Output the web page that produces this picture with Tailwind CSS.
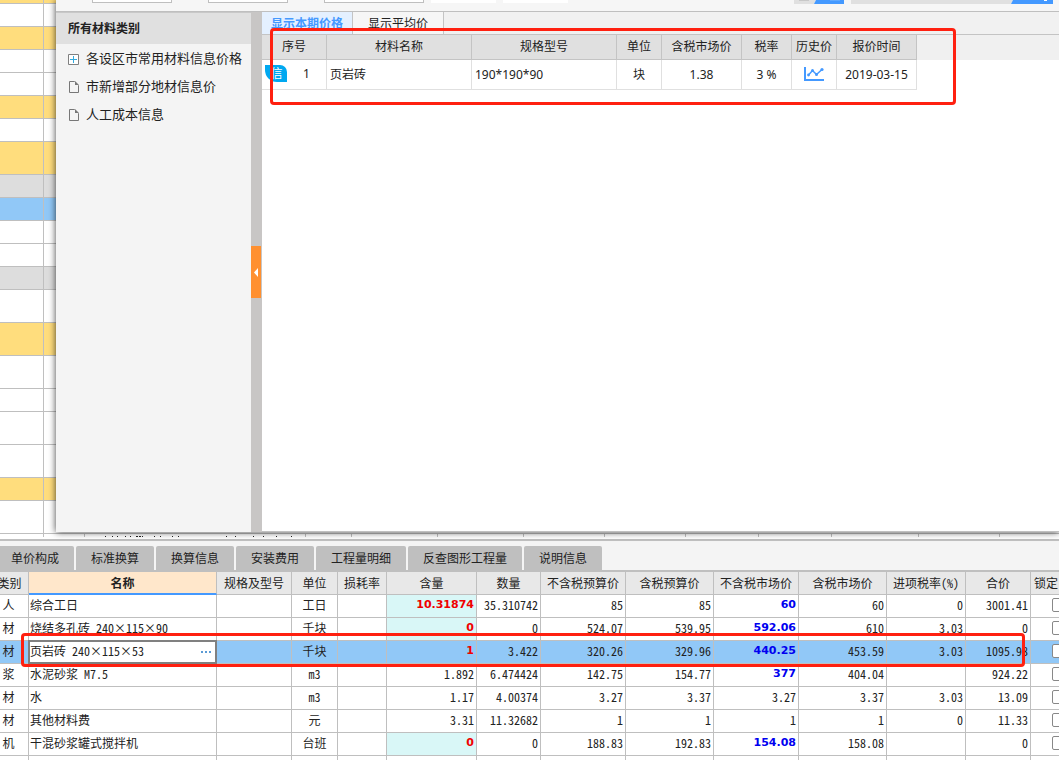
<!DOCTYPE html>
<html lang="zh-CN">
<head>
<meta charset="utf-8">
<title>材料价格查询</title>
<script src="https://cdn.jsdelivr.net/npm/@tailwindcss/browser@4"></script>
</head>
<body class="bg-white">
<div class="relative flex min-h-screen w-full flex-col overflow-hidden font-['Noto_Sans','Noto_Sans_CJK_SC',sans-serif] text-xs text-[#222]">

  <!-- Upper sheet with the price dialog -->
  <section class="flex items-stretch">
    <div id="sheet" class="w-14 shrink-0 overflow-hidden" aria-hidden="true"></div>

    <div class="flex min-w-0 flex-1 flex-col">
      <div class="relative z-10 flex h-[532px] flex-col bg-[#f6f6f6] shadow-[0_0_7px_rgba(0,0,0,0.75)]">
        <!-- Toolbar -->
        <div class="flex h-3 shrink-0 items-start border-b border-[#bfbfbf]">
          <div class="ml-9 h-[3px] w-20 border border-t-0 border-[#bfbfbf] bg-white"></div>
          <div class="ml-9 h-[3px] w-20 border border-t-0 border-[#bfbfbf] bg-white"></div>
          <div class="ml-9 h-[3px] w-[100px] border border-t-0 border-[#bfbfbf] bg-white"></div>
          <div class="ml-[7px] h-[3px] w-[65px] bg-white"></div>
          <div class="ml-[7px] h-[3px] w-[65px] bg-white"></div>
          <div class="mr-[7px] ml-auto">
            <svg class="block h-1 w-[50px]" viewBox="0 0 50 4"><path fill="#e0e0e0" d="M0 0h22l-2 4H0z"/><path fill="#c8c8c8" d="M5 0h10v1H5z"/><path fill="#4499ff" d="M22 0h28v4H20z"/><path fill="#60a9ff" d="M36 0h10v1H36z"/></svg>
          </div>
          <svg class="mr-[6px] block h-1 w-[202px]" viewBox="0 0 202 4"><path fill="#e0e0e0" d="M0 0h162l-2 4H0z"/><path fill="#4499ff" d="M162 0h40v4H160z"/><path fill="#fff" d="M193 0h3v1h-3z"/></svg>
        </div>

        <div class="flex min-h-0 flex-1">
          <!-- Category tree -->
          <aside class="w-[195px] shrink-0 border-t border-[#c8c8c8] bg-[#f4f4f4]">
            <h2 class="flex h-[31px] items-center bg-[#e0e0e0] pl-3 text-xs font-bold">所有材料类别</h2>
            <ul class="pt-px text-[13px]">
              <li class="flex h-7 items-center gap-[7px] pl-3 whitespace-nowrap">
                <svg class="h-[11px] w-[11px]" viewBox="0 0 11 11"><path fill="#fff" stroke="#808080" d="M.5.5h10v10H.5z"/><path stroke="#33aadd" d="M2 5.5h7M5.5 2v7"/></svg>各设区市常用材料信息价格</li>
              <li class="flex h-7 items-center gap-[7px] pl-3 whitespace-nowrap">
                <svg class="h-3 w-[11px]" viewBox="0 0 11 12"><path fill="none" stroke="#777" d="M1.500.5h5l4 4v7h-9z"/><path fill="#777" d="M7 0v4h4z"/></svg>市新增部分地材信息价</li>
              <li class="flex h-7 items-center gap-[7px] pl-3 whitespace-nowrap">
                <svg class="h-3 w-[11px]" viewBox="0 0 11 12"><path fill="none" stroke="#777" d="M1.500.5h5l4 4v7h-9z"/><path fill="#777" d="M7 0v4h4z"/></svg>人工成本信息</li>
            </ul>
          </aside>

          <!-- Splitter -->
          <div class="flex w-[11px] shrink-0 items-center bg-[#c8c6c5]">
            <button class="flex h-[52px] w-[10px] items-center justify-center bg-[#ff9030]" aria-label="收起">
              <svg class="h-[9px] w-1" viewBox="0 0 4 9"><path fill="#fff" d="M4 0v9L0 4.500z"/></svg>
            </button>
          </div>

          <!-- Price list -->
          <div class="min-w-0 flex-1 border-b border-[#c0c0c0] bg-white">
            <div class="flex h-[23px] border-b border-[#c4c4c4] bg-[#f1f1f1]">
              <button class="w-[91px] border-r border-[#c4c4c4] bg-[#e4f0ff] pt-[2px] font-bold text-[#4499ff]">显示本期价格</button>
              <button class="w-[91px] border-r border-[#c4c4c4] bg-[#f6f6f6] pt-[2px]">显示平均价</button>
            </div>
            <div class="bg-[linear-gradient(#f0f0f0_25px,#fff_25px)]">
              <table class="w-[655px] table-fixed border-separate border-spacing-0 text-center whitespace-nowrap">
                <colgroup><col class="w-[65px]"><col class="w-[145px]"><col class="w-[145px]"><col class="w-[45px]"><col class="w-[80px]"><col class="w-[50px]"><col class="w-[45px]"><col class="w-[80px]"></colgroup>
                <thead>
                  <tr class="h-[25px] bg-[#e0e0e0] *:border-r *:border-b *:border-[#c4c4c4] *:p-0 *:font-normal">
                    <th>序号</th><th>材料名称</th><th>规格型号</th><th>单位</th><th>含税市场价</th><th>税率</th><th>历史价</th><th>报价时间</th>
                  </tr>
                </thead>
                <tbody>
                  <tr class="h-[30px] *:border-r *:border-b *:border-[#e0e0e0]">
                    <td class="p-0 pb-[2px]">
                      <div class="flex items-center gap-[16px] pl-[3px]">
                        <span class="flex h-[17px] w-[22px] items-center justify-center rounded-tr-[7px] rounded-bl-[12px] bg-[#00a8f0] pl-px text-white">信</span><span>1</span>
                      </div>
                    </td>
                    <td class="p-0 text-left"><span class="pl-[3px]">页岩砖</span></td>
                    <td class="p-0 text-left"><span class="pl-[3px]">190*190*90</span></td>
                    <td class="p-0">块</td><td class="p-0">1.38</td><td class="p-0">3 %</td>
                    <td class="p-0 pb-[2px]">
                      <button class="block w-full" aria-label="历史价">
                        <svg class="mx-auto h-[14px] w-5" viewBox="0 0 20 14"><path fill="none" stroke="#4499ff" stroke-width="2" d="M1 0v13h19"/><path fill="none" stroke="#4499ff" stroke-width="1.500" d="M4.500 8l4-4.500 4 4 5.500-5"/><g fill="#4499ff"><circle cx="4.500" cy="8" r="1.400"/><circle cx="8.500" cy="3.500" r="1.500"/><circle cx="12.500" cy="7.500" r="1.500"/><circle cx="18" cy="2.500" r="1.600"/></g></svg>
                      </button>
                    </td>
                    <td class="p-0">2019-03-15</td>
                  </tr>
                </tbody>
              </table>
            </div>
          </div>
        </div>
      </div>
      <!-- Sheet row that shows below the dialog -->
      <svg class="mt-px h-[6px] w-[1003px]" viewBox="0 0 1003 6" aria-hidden="true">
        <path stroke="#bfbfbf" d="M0 .5h1003M28.500 0v4M249.500 0v4M295.500 0v4M381.500 0v4M467.500 0v4M548.500 0v4M629.500 0v4M702.500 0v4M775.500 0v4M862.500 0v4M943.500 0v4"/>
        <path stroke="#222" d="M49 3.500h1m6 0h1m4 0h1m7 0h1m4 0h1m5 0h2m1 0h2m1 0h1m11 0h1m5 0h1m11 0h1m5 0h1m47 0h1m8 0h1m17 0h1m9 0h1m12 0h1m14 0h1"/>
      </svg>
    </div>
  </section>

  <!-- Detail tabs -->
  <nav class="flex h-[33px] items-end border-t-2 border-b-2 border-[#bfbfbf] bg-[#f4f4f4]">
    <div class="-ml-1 flex gap-[2px] whitespace-nowrap *:h-6 *:rounded-t-xs *:bg-[#bfbfbf] *:px-[15px] *:pt-[2px]">
      <button>单价构成</button><button>标准换算</button><button>换算信息</button><button>安装费用</button><button>工程量明细</button><button>反查图形工程量</button><button>说明信息</button>
    </div>
  </nav>

  <!-- Detail table -->
  <div class="relative">
    <table class="-ml-[9px] w-[1098px] table-fixed border-separate border-spacing-0 font-['Noto_Sans_CJK_SC',sans-serif] whitespace-nowrap [font-feature-settings:'hwid']">
      <colgroup><col class="w-[38px]"><col class="w-[188px]"><col class="w-[75px]"><col class="w-[46px]"><col class="w-[49px]"><col class="w-[90px]"><col class="w-[64px]"><col class="w-[85px]"><col class="w-[88px]"><col class="w-[85px]"><col class="w-[88px]"><col class="w-[79px]"><col class="w-[65px]"><col class="w-[58px]"></colgroup>
      <thead>
        <tr class="h-[23px] bg-[#e8e8e8] *:border-r *:border-r-[#bfbfbf] *:p-0 *:leading-4">
          <th class="border-b border-b-[#bfbfbf] font-normal">类别</th><th class="border-b-2 border-b-[#4499ff] bg-[#ffe7cb] font-bold">名称</th><th class="border-b border-b-[#bfbfbf] font-normal">规格及型号</th><th class="border-b border-b-[#bfbfbf] font-normal">单位</th><th class="border-b border-b-[#bfbfbf] font-normal">损耗率</th><th class="border-b border-b-[#bfbfbf] font-normal">含量</th><th class="border-b border-b-[#bfbfbf] font-normal">数量</th><th class="border-b border-b-[#bfbfbf] font-normal">不含税预算价</th><th class="border-b border-b-[#bfbfbf] font-normal">含税预算价</th><th class="border-b border-b-[#bfbfbf] font-normal">不含税市场价</th><th class="border-b border-b-[#bfbfbf] font-normal">含税市场价</th><th class="border-b border-b-[#bfbfbf] font-normal">进项税率(%)</th><th class="border-b border-b-[#bfbfbf] font-normal">合价</th><th class="border-b border-b-[#bfbfbf] text-left font-normal"><span class="pl-[3px]">锁定</span></th>
        </tr>
      </thead>
      <tbody id="details"></tbody>
    </table>
    <div class="pointer-events-none absolute top-[61px] right-[34px] left-[21px] h-[34px] rounded-sm border-[3px] border-[#ff2010]"></div>
  </div>

  <div class="pointer-events-none absolute top-7 right-[103px] left-[270px] z-20 h-[77px] rounded-sm border-[3px] border-[#ff2010]"></div>
</div>

<script>
  const fills = { w: 'bg-white', y: 'bg-[#ffdd7d]', g: 'bg-[#dddddd]', b: 'bg-[#91c8f7]' };
  const rows = [['y',4],['w',23],['y',23],['w',23],['w',23],['y',23],['w',23],['y',33],['g',23],['b',23],['w',23],['w',23],['g',23],['w',33],['y',33],['w',33],['w',23],['w',33],['w',33],['y',23],['w',33]];
  document.getElementById('sheet').innerHTML = rows.map(([f, h]) =>
    `<div class="flex border-b border-[#bfbfbf] ${fills[f]}" style="height:${h}px"><div class="w-11 border-r border-[#bfbfbf]"></div></div>`
  ).join('') + '<div class="h-[3px] w-11 border-r border-[#bfbfbf]"></div>';

  const data = [
    ['人','综合工日','工日','10.31874','35.310742','85','85','60','60','0','3001.41'],
    ['材','烧结多孔砖 240×115×90','千块','0','0','524.07','539.95','592.06','610','3.03','0'],
    ['材','页岩砖 240×115×53','千块','1','3.422','320.26','329.96','440.25','453.59','3.03','1095.98'],
    ['浆','水泥砂浆 M7.5','m3','1.892','6.474424','142.75','154.77','377','404.04','','924.22'],
    ['材','水','m3','1.17','4.00374','3.27','3.37','3.27','3.37','3.03','13.09'],
    ['材','其他材料费','元','3.31','11.32682','1','1','1','1','0','11.33'],
    ['机','干混砂浆罐式搅拌机','台班','0','0','188.83','192.83','154.08','158.08','','0'],
    ['','','','','','','','','','','']
  ];
  const editedAmount = [0, 1, 2, 6], editedPrice = [0, 1, 2, 3, 6];
  document.getElementById('details').innerHTML = data.map((d, i) => {
    const num = v => `<td class="text-right"><span class="pr-[2px]">${v}</span></td>`;
    const selected = i === 2, blank = i === 7;
    const name = selected
      ? `<td class="relative"><div class="absolute -inset-px flex items-center border-2 border-[#808080] bg-white pr-1"><input class="min-w-0 flex-1 pb-[2px] outline-none" aria-label="名称" value="${d[1]}"><button class="flex gap-[2px]" aria-label="选择材料"><i class="size-[2px] bg-[#5b9bd5]"></i><i class="size-[2px] bg-[#5b9bd5]"></i><i class="size-[2px] bg-[#5b9bd5]"></i></button></div></td>`
      : `<td><span class="pl-px">${d[1]}</span></td>`;
    const amount = editedAmount.includes(i)
      ? `<td class="text-right font-['DejaVu_Sans',sans-serif] text-[11px] font-bold text-[#f00000] ${selected ? '' : 'bg-[#d9f7f7]'}"><span class="pr-[2px]">${d[3]}</span></td>` : num(d[3]);
    const price = editedPrice.includes(i)
      ? `<td class="text-right font-['DejaVu_Sans',sans-serif] text-[11px] font-bold text-[#0000f0]"><span class="pr-[2px]">${d[7]}</span></td>` : num(d[7]);
    const lock = blank ? '<td></td>'
      : `<td><div class="flex justify-center pr-[2px]"><input type="checkbox" aria-label="锁定 ${d[1]}" class="size-[14px] appearance-none rounded-xs border border-[#888] bg-white"></div></td>`;
    return `<tr class="h-[23px] *:border-r *:border-b *:border-[#bfbfbf] *:p-0 *:pb-[2px] *:leading-4 ${selected ? 'bg-[#91c8f7]' : 'bg-white'}">
      <td class="text-center"><span class="pr-[2px]">${d[0]}</span></td>${name}<td></td><td class="text-center">${d[2]}</td><td></td>${amount}${num(d[4])}${num(d[5])}${num(d[6])}${price}${num(d[8])}${num(d[9])}${num(d[10])}${lock}</tr>`;
  }).join('');
</script>
</body>
</html>
